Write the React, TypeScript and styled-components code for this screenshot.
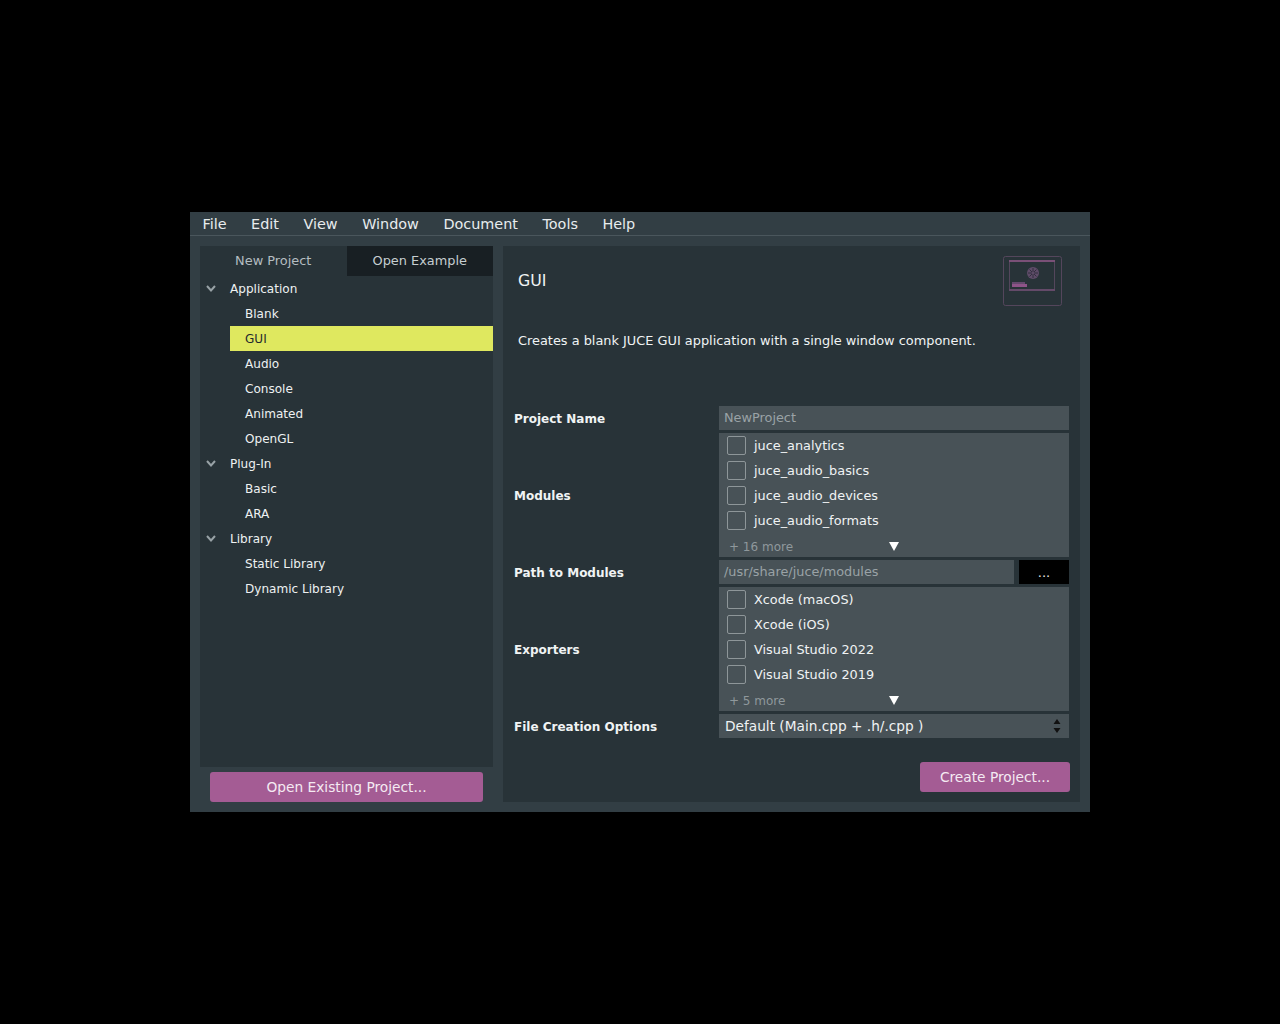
import React from "react";
import styled, { createGlobalStyle } from "styled-components";

const Global = createGlobalStyle`
  html, body { margin: 0; padding: 0; background: #000; }
  body { font-family: "DejaVu Sans", sans-serif; }
`;

const Page = styled.div`
  width: 1280px;
  height: 1024px;
  box-sizing: border-box;
  padding: 212px 190px;
  background: #000;
`;
const Window = styled.div`
  width: 900px;
  height: 600px;
  display: flex;
  flex-direction: column;
  background: #323e44;
`;
const MenuBar = styled.div`
  height: 23px;
  display: flex;
  align-items: center;
  padding-left: 12.5px;
  gap: 24.5px;
  border-bottom: 1px solid #4a565c;
  background: #323e44;
`;
const MenuItem = styled.span`
  color: #e8ecee;
  font-size: 14.4px;
`;
const Body = styled.div`
  flex: 1;
  display: flex;
  gap: 10px;
  padding: 10px 10px 10px;
  min-height: 0;
`;
const LeftColumn = styled.div`
  width: 293px;
  display: flex;
  flex-direction: column;
`;
const TreePanel = styled.div`
  height: 521px;
  background: #283338;
`;
const Tabs = styled.div`
  display: flex;
  height: 30px;
`;
const Tab = styled.div<{ $active?: boolean }>`
  flex: 1;
  display: flex;
  align-items: center;
  justify-content: center;
  padding-bottom: 2px;
  font-size: 12.9px;
  color: ${(p) => (p.$active ? "#b4bdc1" : "#c6ced1")};
  background: ${(p) => (p.$active ? "#283338" : "#181f23")};
`;
const TreeRow = styled.div<{ $indent: number; $selected?: boolean }>`
  height: 25px;
  display: flex;
  align-items: center;
  margin-left: 30px;
  padding-left: ${(p) => p.$indent}px;
  font-size: 12.05px;
  color: ${(p) => (p.$selected ? "#1f2a2e" : "#eef1f2")};
  background: ${(p) => (p.$selected ? "#dfe85f" : "transparent")};
  position: relative;
`;
const Chevron = styled.svg`
  position: absolute;
  left: -24px;
  top: 8px;
  width: 10px;
  height: 9px;
`;
const PurpleButton = styled.div`
  display: flex;
  align-items: center;
  justify-content: center;
  height: 30px;
  border-radius: 3px;
  background: #a45c94;
  color: #f4eaf2;
  font-size: 13.75px;
`;
const OpenButton = styled(PurpleButton)`
  margin: 5px 10px 0;
`;
const RightPanel = styled.div`
  flex: 1;
  display: flex;
  flex-direction: column;
  background: #283338;
`;
const Header = styled.div`
  display: flex;
  justify-content: space-between;
  padding: 10px 17px 0 15px;
  height: 50px;
`;
const Title = styled.div`
  color: #f0f3f4;
  font-size: 15.8px;
  line-height: 50px;
`;
const Description = styled.div`
  margin: 27px 15px 0;
  height: 73px;
  color: #f0f3f4;
  font-size: 12.9px;
  line-height: 16px;
`;
const Form = styled.div`
  display: grid;
  grid-template-columns: 205px 350px;
  grid-auto-rows: auto;
  row-gap: 3px;
  padding-left: 11px;
`;
const Label = styled.div`
  display: flex;
  align-items: center;
  padding-top: 2px;
  color: #f0f3f4;
  font-size: 12px;
  font-weight: 700;
`;
const Input = styled.div`
  height: 24px;
  box-sizing: border-box;
  flex: 1;
  display: flex;
  align-items: center;
  padding: 0 0 2px 5px;
  background: #485257;
  color: #9aa2a6;
  font-size: 12.85px;
`;
const PathRow = styled.div`
  display: flex;
  gap: 5px;
`;
const BrowseButton = styled.div`
  width: 50px;
  height: 24px;
  background: #000;
  color: #e6e6e6;
  font-size: 13px;
  display: flex;
  align-items: center;
  justify-content: center;
`;
const ListBox = styled.div`
  height: 124px;
  background: #485257;
  display: flex;
  flex-direction: column;
`;
const CheckRow = styled.div`
  height: 25px;
  display: flex;
  align-items: center;
  padding-left: 8px;
  gap: 8px;
  color: #f0f3f4;
  font-size: 12.85px;
`;
const CheckBox = styled.span`
  box-sizing: border-box;
  width: 19px;
  height: 19px;
  border: 1px solid #8e9699;
  border-radius: 2px;
`;
const MoreRow = styled.div`
  height: 24px;
  box-sizing: border-box;
  position: relative;
  display: flex;
  align-items: center;
  padding: 3px 0 0 10px;
  color: #8f989c;
  font-size: 12px;
`;
const DownArrow = styled.svg`
  position: absolute;
  left: 170px;
  top: 9px;
  width: 10px;
  height: 9px;
`;
const Select = styled.div`
  height: 24px;
  display: flex;
  align-items: center;
  justify-content: space-between;
  padding: 0 8px 0 6px;
  background: #485257;
  color: #f0f3f4;
  font-size: 13.7px;
`;
const Footer = styled.div`
  display: flex;
  justify-content: flex-end;
  padding: 24px 10px 0 0;
`;
const CreateButton = styled(PurpleButton)`
  width: 150px;
`;

const Icon = () => (
  <svg width="60" height="50" viewBox="0 0 60 50" fill="none">
    <rect x="0.5" y="0.5" width="58" height="49" rx="2" stroke="#54465c" />
    <rect x="6.5" y="4.5" width="45" height="30" stroke="#54465c" />
    <rect x="6" y="4" width="46" height="2" fill="#7a5077" />
    <rect x="6" y="33" width="46" height="2" fill="#644a69" />
    <circle cx="30" cy="17" r="6" fill="#5f4c69" />
    <path d="M30 12v10M25 17h10M26.5 13.5l7 7M33.5 13.5l-7 7" stroke="#2e2c3a" strokeWidth="0.9" />
    <circle cx="30" cy="17" r="1.2" fill="#5f4c69" />
    <rect x="9" y="26" width="13" height="2" fill="#654a6e" />
    <rect x="9" y="28" width="15" height="3" fill="#8e5488" />
  </svg>
);

const Chev = () => (
  <Chevron viewBox="0 0 10 9" fill="none">
    <path d="M1 2l4 4.5L9 2" stroke="#98a2a6" strokeWidth="2" />
  </Chevron>
);

const Arrow = () => (
  <DownArrow viewBox="0 0 10 9">
    <path d="M0 0h10L5 9z" fill="#fff" />
  </DownArrow>
);

const tree: { name: string; group?: boolean; selected?: boolean }[] = [
  { name: "Application", group: true },
  { name: "Blank" },
  { name: "GUI", selected: true },
  { name: "Audio" },
  { name: "Console" },
  { name: "Animated" },
  { name: "OpenGL" },
  { name: "Plug-In", group: true },
  { name: "Basic" },
  { name: "ARA" },
  { name: "Library", group: true },
  { name: "Static Library" },
  { name: "Dynamic Library" },
];

const menus = ["File", "Edit", "View", "Window", "Document", "Tools", "Help"];
const modules = ["juce_analytics", "juce_audio_basics", "juce_audio_devices", "juce_audio_formats"];
const exporters = ["Xcode (macOS)", "Xcode (iOS)", "Visual Studio 2022", "Visual Studio 2019"];

const CheckList = ({ items, more }: { items: string[]; more: string }) => (
  <ListBox>
    {items.map((item) => (
      <CheckRow key={item}>
        <CheckBox />
        {item}
      </CheckRow>
    ))}
    <MoreRow>
      {more}
      <Arrow />
    </MoreRow>
  </ListBox>
);

export default function App() {
  return (
    <Page>
      <Global />
      <Window>
        <MenuBar>
          {menus.map((m) => (
            <MenuItem key={m}>{m}</MenuItem>
          ))}
        </MenuBar>
        <Body>
          <LeftColumn>
            <TreePanel>
              <Tabs>
                <Tab $active>New Project</Tab>
                <Tab>Open Example</Tab>
              </Tabs>
              {tree.map((t) => (
                <TreeRow key={t.name} $indent={t.group ? 0 : 15} $selected={t.selected}>
                  {t.group && <Chev />}
                  {t.name}
                </TreeRow>
              ))}
            </TreePanel>
            <OpenButton>Open Existing Project...</OpenButton>
          </LeftColumn>
          <RightPanel>
            <Header>
              <Title>GUI</Title>
              <Icon />
            </Header>
            <Description>Creates a blank JUCE GUI application with a single window component.</Description>
            <Form>
              <Label>Project Name</Label>
              <Input>NewProject</Input>
              <Label>Modules</Label>
              <CheckList items={modules} more="+ 16 more" />
              <Label>Path to Modules</Label>
              <PathRow>
                <Input>/usr/share/juce/modules</Input>
                <BrowseButton>...</BrowseButton>
              </PathRow>
              <Label>Exporters</Label>
              <CheckList items={exporters} more="+ 5 more" />
              <Label>File Creation Options</Label>
              <Select>
                Default (Main.cpp + .h/.cpp )
                <svg width="8" height="16" viewBox="0 0 8 16">
                  <path d="M4 1l3.5 5H.5zM4 15L.5 10h7z" fill="#111" />
                </svg>
              </Select>
            </Form>
            <Footer>
              <CreateButton>Create Project...</CreateButton>
            </Footer>
          </RightPanel>
        </Body>
      </Window>
    </Page>
  );
}
